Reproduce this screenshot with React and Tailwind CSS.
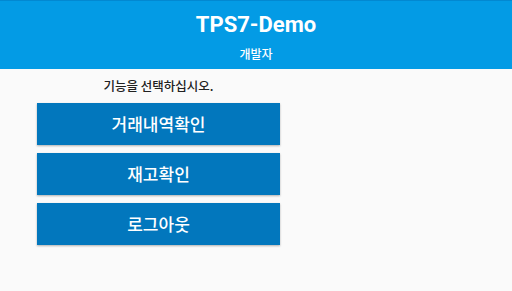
export default function App() {
  const items = ["거래내역확인", "재고확인", "로그아웃"];
  return (
    <div className="w-[512px] h-[291px] bg-[#fafafa] overflow-hidden" style={{ fontFamily: 'Roboto, "Noto Sans CJK KR", sans-serif' }}>
      <header className="h-[69px] bg-[#039be5] border-t border-[#0288d1] flex flex-col items-center text-white">
        <div className="text-[22px] font-bold leading-none mt-[13px]">TPS7-Demo</div>
        <div className="text-[12px] font-medium leading-none mt-[12px]" style={{ fontFamily: '"Noto Sans CJK KR", sans-serif' }}>개발자</div>
      </header>
      <div className="ml-[37px] w-[243px] flex flex-col" style={{ fontFamily: '"Noto Sans CJK KR", sans-serif' }}>
        <div className="text-center text-[12.5px] text-[#212121] font-medium leading-none mt-[11px] h-[23px]">기능을 선택하십시오.</div>
        <div className="flex flex-col gap-[8px]">
          {items.map((t) => (
            <div key={t} className="h-[42px] bg-[#0277bd] text-white flex items-center justify-center text-[17px] font-medium shadow-[0_1px_2px_rgba(0,0,0,0.3)]">
              {t}
            </div>
          ))}
        </div>
      </div>
    </div>
  );
}
